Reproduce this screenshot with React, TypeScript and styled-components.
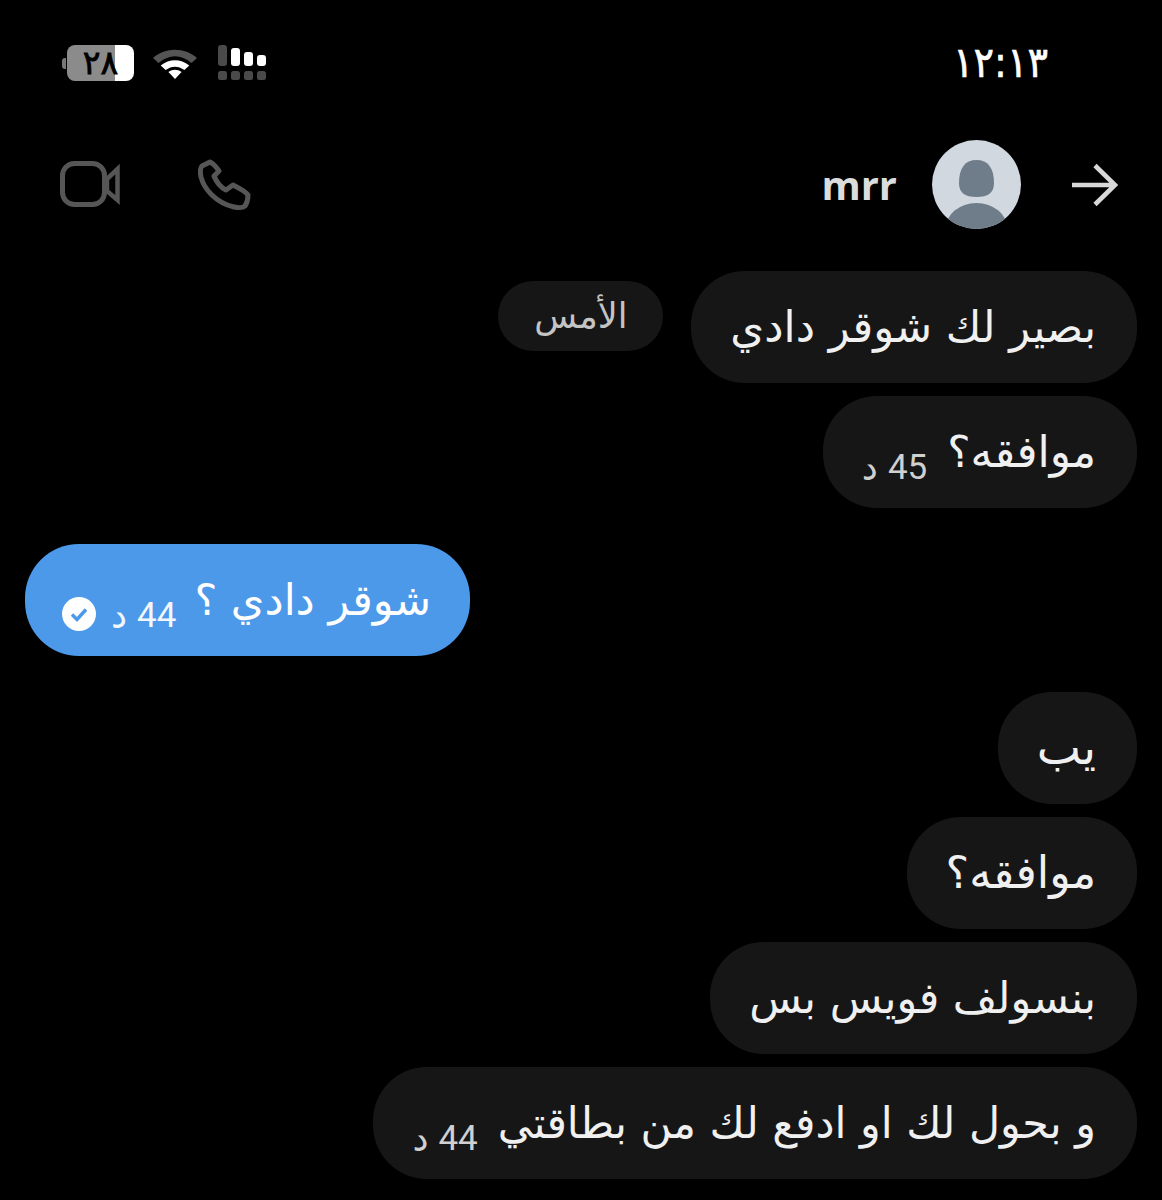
import React from "react";
import styled, { createGlobalStyle } from "styled-components";

const Global = createGlobalStyle`
  html, body { margin: 0; background: #000; }
  body { font-family: "DejaVu Sans", "Noto Sans", sans-serif; }
`;

const Page = styled.div`
  width: 1162px;
  height: 1200px;
  overflow: hidden;
  background: #000;
  display: flex;
  flex-direction: column;
  box-sizing: border-box;
`;

const StatusBar = styled.div`
  display: flex;
  direction: ltr;
  align-items: center;
  justify-content: space-between;
  height: 36px;
  margin-top: 45px;
  padding: 0 114px 0 62px;
`;

const StatusIcons = styled.div`
  display: flex;
  align-items: center;
  gap: 19px;
`;

const BatteryWrap = styled.div`
  display: flex;
  align-items: center;
  gap: 1px;
`;

const BatteryNub = styled.div`
  width: 4px;
  height: 11px;
  background: #777;
  border-radius: 3px 0 0 3px;
`;

const Battery = styled.div`
  width: 67px;
  height: 36px;
  border-radius: 8px;
  background: linear-gradient(90deg, #8b8b8b 0 48px, #fff 48px);
  color: #000;
  font-size: 33px;
  line-height: 36px;
  -webkit-text-stroke: 0.8px #000;
  display: flex;
  align-items: center;
  justify-content: center;
  box-sizing: border-box;
`;

const Clock = styled.div`
  color: #fff;
  font-family: "DejaVu Sans Condensed", "DejaVu Sans", sans-serif;
  font-size: 42.5px;
  line-height: 36px;
  -webkit-text-stroke: 0.6px #fff;
`;

const Header = styled.div`
  display: flex;
  direction: ltr;
  align-items: flex-start;
  height: 90px;
  margin-top: 59px;
  padding: 0 44px 0 60px;
`;

const CallGroup = styled.div`
  display: flex;
  align-items: center;
  gap: 78px;
  height: 90px;
  margin-right: auto;
`;

const Name = styled.div`
  color: #dcdcdc;
  font-family: "Open Sans", "Noto Sans", sans-serif;
  font-weight: 700;
  font-size: 40px;
  line-height: 90px;
  margin-right: 35px;
`;

const Avatar = styled.svg`
  display: block;
  margin-right: 49px;
`;

const BackSlot = styled.div`
  display: flex;
  align-items: center;
  height: 90px;
`;

const Thread = styled.div`
  display: flex;
  flex-direction: column;
  direction: rtl;
  margin-top: 41px;
  padding: 0 25px;
  gap: 13px;
`;

const Row = styled.div<{ $gap?: number; $outgoing?: boolean }>`
  display: flex;
  align-items: flex-start;
  gap: 28px;
  margin-top: ${(p) => p.$gap ?? 0}px;
  justify-content: ${(p) => (p.$outgoing ? "flex-end" : "flex-start")};
`;

const Bubble = styled.div<{ $outgoing?: boolean }>`
  height: 112px;
  border-radius: 54px;
  box-sizing: border-box;
  display: flex;
  align-items: center;
  gap: ${(p) => (p.$outgoing ? 18 : 20)}px;
  padding: ${(p) => (p.$outgoing ? "0 39px 0 37px" : "0 41px 0 39px")};
  white-space: nowrap;
  color: ${(p) => (p.$outgoing ? "#fff" : "#f0f0f0")};
  background: ${(p) => (p.$outgoing ? "#4c98e9" : "#161617")};
`;

const Text = styled.span<{ $size?: number }>`
  display: block;
  font-size: ${(p) => p.$size ?? 43}px;
  line-height: 50px;
`;

const Meta = styled.span<{ $outgoing?: boolean }>`
  display: flex;
  align-items: center;
  gap: 15px;
  align-self: flex-end;
  margin-bottom: 22px;
  font-size: 35px;
  line-height: 36px;
  font-family: "Roboto", "DejaVu Sans", sans-serif;
  color: ${(p) => (p.$outgoing ? "#f2f7fd" : "#d0d0d0")};
`;

const MetaCount = styled.span`
  margin-top: 4px;
`;

const MetaUnit = styled.span`
  margin-top: 4px;
  margin-right: -5px;
  font-size: 36px;
  font-family: "DejaVu Sans", sans-serif;
`;

const DayChip = styled.div`
  margin-top: 10px;
  height: 70px;
  width: 165px;
  border-radius: 35px;
  background: #161617;
  color: #c4c4c4;
  font-size: 35px;
  display: flex;
  align-items: center;
  justify-content: center;
`;

const VideoIcon = () => (
  <svg width="60" height="48" viewBox="0 0 60 48" fill="none">
    <rect x="2.5" y="2.5" width="42" height="41" rx="12" stroke="#565656" strokeWidth="5" />
    <path d="M47 18 L57.5 8 V39 L47 30 Z" stroke="#565656" strokeWidth="4.5" strokeLinejoin="miter" />
  </svg>
);

const PhoneIcon = () => (
  <svg width="53" height="52" viewBox="0 0 53 52" fill="none">
    <path
      d="M12 3 L4 7 C2 9 2 13 3 18 C6 30 18 44 36 48 C41 49 45 49 47 47 C49 44 50 40 50 36 C48 33 41 29 35 26 L28 31 C22 28 18 22 16 17 L21 12 C19 9 16 5 12 3 Z"
      stroke="#565656"
      strokeWidth="5"
      strokeLinejoin="round"
    />
  </svg>
);

const WifiIcon = () => (
  <svg width="44" height="34" viewBox="2 0 40 34" preserveAspectRatio="none" fill="none">
    <path d="M2 12 C13 1 31 1 42 12 L37 17 C27 8 17 8 7 17 Z" fill="#555" />
    <path d="M9 19.5 C17 12.5 27 12.5 35 19.5 L30.5 24 C25 19.5 19 19.5 13.5 24 Z" fill="#fff" />
    <path d="M16 26 C20 23 24 23 28 26 L22 33 Z" fill="#fff" />
  </svg>
);

const SignalIcon = () => (
  <svg width="50" height="36" viewBox="-2 0 50 36">
    <rect x="0" y="0" width="9" height="21" rx="3" fill="#4a4a4a" />
    <rect x="13" y="3" width="9" height="18" rx="3" fill="#fff" />
    <rect x="26" y="7" width="9" height="14" rx="3" fill="#fff" />
    <rect x="39" y="10" width="9" height="11" rx="3" fill="#fff" />
    <rect x="0" y="26" width="9" height="9" rx="2.5" fill="#4a4a4a" />
    <rect x="13" y="26" width="9" height="9" rx="2.5" fill="#4a4a4a" />
    <rect x="26" y="26" width="9" height="9" rx="2.5" fill="#4a4a4a" />
    <rect x="39" y="26" width="9" height="9" rx="2.5" fill="#4a4a4a" />
  </svg>
);

const ArrowIcon = () => (
  <svg width="48" height="44" viewBox="0 0 48 44" fill="none">
    <path d="M2 22 H45 M25 2.5 L45 22 L25 41.5" stroke="#d8d8d8" strokeWidth="4.6" />
  </svg>
);

const ReadIcon = () => (
  <svg width="34" height="34" viewBox="0 0 34 34">
    <circle cx="17" cy="17" r="17" fill="#fff" />
    <path d="M10 17.5 L15 22.5 L24 12.5" fill="none" stroke="#4c98e9" strokeWidth="3.4" />
  </svg>
);

export default function App() {
  return (
    <Page>
      <Global />
      <StatusBar>
        <StatusIcons>
          <BatteryWrap>
            <BatteryNub />
            <Battery>٢٨</Battery>
          </BatteryWrap>
          <WifiIcon />
          <SignalIcon />
        </StatusIcons>
        <Clock>١٢:١٣</Clock>
      </StatusBar>
      <Header>
        <CallGroup>
          <VideoIcon />
          <PhoneIcon />
        </CallGroup>
        <Name>mrr</Name>
        <Avatar width="89" height="89" viewBox="0 0 89 89">
          <defs>
            <clipPath id="avatar-clip">
              <circle cx="44.5" cy="44.5" r="44.5" />
            </clipPath>
          </defs>
          <circle cx="44.5" cy="44.5" r="44.5" fill="#d2d8e0" />
          <g clipPath="url(#avatar-clip)" fill="#6f7d8a">
            <path d="M44.5 20 C56 20 62 28 62 43 C62 53 56 57 44.5 57 C33 57 27 53 27 43 C27 28 33 20 44.5 20 Z" />
            <ellipse cx="44.5" cy="89" rx="31" ry="26" />
          </g>
        </Avatar>
        <BackSlot>
          <ArrowIcon />
        </BackSlot>
      </Header>
      <Thread>
        <Row>
          <Bubble>
            <Text $size={43.35}>بصير لك شوقر دادي</Text>
          </Bubble>
          <DayChip>الأمس</DayChip>
        </Row>
        <Row>
          <Bubble>
            <Text $size={44}>موافقه؟</Text>
            <Meta>
              <MetaCount>45</MetaCount>
              <MetaUnit>د</MetaUnit>
            </Meta>
          </Bubble>
        </Row>
        <Row $outgoing $gap={23}>
          <Bubble $outgoing>
            <Text>شوقر دادي ؟</Text>
            <Meta $outgoing>
              <MetaCount>44</MetaCount>
              <MetaUnit>د</MetaUnit>
              <ReadIcon />
            </Meta>
          </Bubble>
        </Row>
        <Row $gap={23}>
          <Bubble>
            <Text $size={47}>يب</Text>
          </Bubble>
        </Row>
        <Row>
          <Bubble>
            <Text $size={44.5}>موافقه؟</Text>
          </Bubble>
        </Row>
        <Row>
          <Bubble>
            <Text>بنسولف فويس بس</Text>
          </Bubble>
        </Row>
        <Row>
          <Bubble>
            <Text $size={42.8}>و بحول لك او ادفع لك من بطاقتي</Text>
            <Meta>
              <MetaCount>44</MetaCount>
              <MetaUnit>د</MetaUnit>
            </Meta>
          </Bubble>
        </Row>
      </Thread>
    </Page>
  );
}
